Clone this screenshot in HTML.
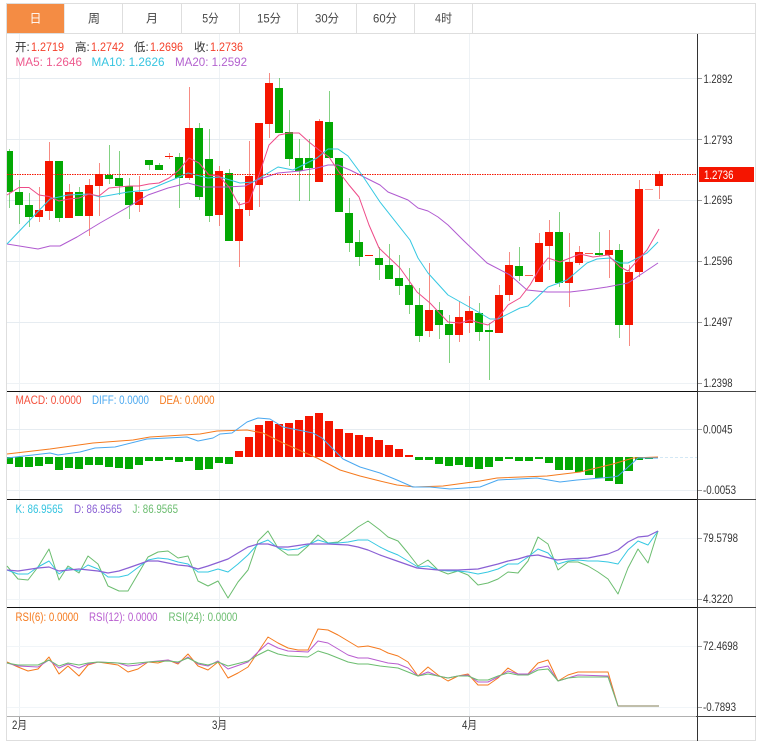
<!DOCTYPE html>
<html lang="zh">
<head>
<meta charset="utf-8">
<title>K线图</title>
<style>
html,body{margin:0;padding:0;background:#fff;width:762px;height:750px;overflow:hidden}
svg{display:block}
text{font-family:"Liberation Sans","Noto Sans CJK SC",sans-serif;font-size:11.5px}
</style>
</head>
<body>
<svg width="762" height="750" viewBox="0 0 762 750" xmlns="http://www.w3.org/2000/svg">
<rect width="762" height="750" fill="#fff"/>

<!-- vertical grid -->
<g fill="#eef2f5" shape-rendering="crispEdges">
<rect x="19" y="34" width="1" height="682"/>
<rect x="219" y="34" width="1" height="682"/>
<rect x="469" y="34" width="1" height="682"/>
</g>
<!-- horizontal grid -->
<g fill="#e6ecf1" shape-rendering="crispEdges">
<rect x="7" y="78" width="690" height="1"/>
<rect x="7" y="139" width="690" height="1"/>
<rect x="7" y="200" width="690" height="1"/>
<rect x="7" y="261" width="690" height="1"/>
<rect x="7" y="322" width="690" height="1"/>
<rect x="7" y="383" width="690" height="1" fill="#eef2f5"/>
<rect x="7" y="429" width="690" height="1"/>
<rect x="7" y="490" width="690" height="1" fill="#eaeff3"/>
<rect x="7" y="538" width="690" height="1" fill="#f1f5f8"/>
<rect x="7" y="599" width="690" height="1" fill="#f1f5f8"/>
<rect x="7" y="646" width="690" height="1" fill="#f1f5f8"/>
<rect x="7" y="707" width="690" height="1" fill="#f1f5f8"/>
</g>

<!-- tabs -->
<rect x="6.5" y="3.5" width="749" height="737" fill="none" stroke="#dedede"/>
<rect x="6" y="33" width="750" height="1" fill="#dedede"/>
<rect x="7" y="4" width="57" height="29" fill="#f48c44"/>
<g fill="#dedede" shape-rendering="crispEdges">
<rect x="64" y="4" width="1" height="29" fill="#e8e8e8"/>
<rect x="122" y="4" width="1" height="29"/>
<rect x="181" y="4" width="1" height="29"/>
<rect x="239" y="4" width="1" height="29"/>
<rect x="297" y="4" width="1" height="29"/>
<rect x="356" y="4" width="1" height="29"/>
<rect x="414" y="4" width="1" height="29"/>
<rect x="472" y="4" width="1" height="29"/>
</g>
<g fill="#444" text-anchor="middle" style="font-size:12px">
<text x="35.5" y="22.5" fill="#fff" style="font-size:12px">日</text>
<text x="94" y="22.5" style="font-size:12px">周</text>
<text x="152" y="22.5" style="font-size:12px">月</text>
<text x="210.5" y="22.5" style="font-size:12px" textLength="16.5" lengthAdjust="spacingAndGlyphs">5分</text>
<text x="269" y="22.5" style="font-size:12px" textLength="24" lengthAdjust="spacingAndGlyphs">15分</text>
<text x="327" y="22.5" style="font-size:12px" textLength="24" lengthAdjust="spacingAndGlyphs">30分</text>
<text x="385" y="22.5" style="font-size:12px" textLength="24" lengthAdjust="spacingAndGlyphs">60分</text>
<text x="443.5" y="22.5" style="font-size:12px" textLength="17" lengthAdjust="spacingAndGlyphs">4时</text>
</g>

<!-- legend -->
<g>
<text x="15" y="51" fill="#333">开:</text>
<text x="31" y="51" fill="#f4402a" textLength="33" lengthAdjust="spacingAndGlyphs">1.2719</text>
<text x="75" y="51" fill="#333">高:</text>
<text x="91" y="51" fill="#f4402a" textLength="33" lengthAdjust="spacingAndGlyphs">1.2742</text>
<text x="134" y="51" fill="#333">低:</text>
<text x="150" y="51" fill="#f4402a" textLength="33" lengthAdjust="spacingAndGlyphs">1.2696</text>
<text x="194" y="51" fill="#333">收:</text>
<text x="210" y="51" fill="#f4402a" textLength="33" lengthAdjust="spacingAndGlyphs">1.2736</text>
<text x="15.5" y="66" fill="#ee5a8e" textLength="66.5" lengthAdjust="spacingAndGlyphs">MA5:  1.2646</text>
<text x="91.5" y="66" fill="#35c4e0" textLength="73" lengthAdjust="spacingAndGlyphs">MA10:  1.2626</text>
<text x="175" y="66" fill="#b362cf" textLength="72" lengthAdjust="spacingAndGlyphs">MA20:  1.2592</text>
</g>

<!-- wicks -->
<g shape-rendering="crispEdges">
<g fill="#0aa60a" opacity=".5">
<rect x="9" y="149" width="1" height="59"/>
<rect x="19" y="180" width="1" height="44"/>
<rect x="29" y="193" width="1" height="34"/>
<rect x="59" y="161" width="1" height="61"/>
<rect x="79" y="187" width="1" height="29"/>
<rect x="109" y="145" width="1" height="39"/>
<rect x="119" y="151" width="1" height="44"/>
<rect x="129" y="178" width="1" height="41"/>
<rect x="149" y="160" width="1" height="10"/>
<rect x="159" y="163" width="1" height="7"/>
<rect x="179" y="153" width="1" height="55"/>
<rect x="199" y="123" width="1" height="77"/>
<rect x="209" y="129" width="1" height="93"/>
<rect x="229" y="169" width="1" height="72"/>
<rect x="279" y="78" width="1" height="55"/>
<rect x="289" y="110" width="1" height="56"/>
<rect x="299" y="139" width="1" height="62"/>
<rect x="309" y="139" width="1" height="62"/>
<rect x="329" y="91" width="1" height="67"/>
<rect x="349" y="198" width="1" height="54"/>
<rect x="359" y="230" width="1" height="36"/>
<rect x="379" y="247" width="1" height="33"/>
<rect x="389" y="244" width="1" height="35"/>
<rect x="399" y="255" width="1" height="40"/>
<rect x="409" y="268" width="1" height="46"/>
<rect x="419" y="288" width="1" height="54"/>
<rect x="439" y="302" width="1" height="37"/>
<rect x="449" y="315" width="1" height="48"/>
<rect x="479" y="303" width="1" height="38"/>
<rect x="489" y="323" width="1" height="57"/>
<rect x="519" y="247" width="1" height="34"/>
<rect x="559" y="212" width="1" height="75"/>
<rect x="599" y="232" width="1" height="24"/>
<rect x="619" y="244" width="1" height="94"/>
</g>
<g fill="#f01a0a" opacity=".5">
<rect x="39" y="187" width="1" height="35"/>
<rect x="49" y="142" width="1" height="78"/>
<rect x="69" y="184" width="1" height="34"/>
<rect x="89" y="179" width="1" height="57"/>
<rect x="99" y="163" width="1" height="53"/>
<rect x="139" y="176" width="1" height="36"/>
<rect x="169" y="153" width="1" height="6"/>
<rect x="189" y="87" width="1" height="93"/>
<rect x="219" y="166" width="1" height="60"/>
<rect x="239" y="202" width="1" height="65"/>
<rect x="249" y="141" width="1" height="75"/>
<rect x="259" y="123" width="1" height="84"/>
<rect x="269" y="73" width="1" height="65"/>
<rect x="319" y="119" width="1" height="63"/>
<rect x="429" y="263" width="1" height="74"/>
<rect x="459" y="301" width="1" height="41"/>
<rect x="469" y="296" width="1" height="37"/>
<rect x="499" y="285" width="1" height="48"/>
<rect x="509" y="252" width="1" height="49"/>
<rect x="539" y="233" width="1" height="49"/>
<rect x="549" y="220" width="1" height="50"/>
<rect x="569" y="233" width="1" height="74"/>
<rect x="579" y="246" width="1" height="19"/>
<rect x="609" y="230" width="1" height="48"/>
<rect x="629" y="265" width="1" height="81"/>
<rect x="639" y="180" width="1" height="97"/>
<rect x="659" y="171" width="1" height="28"/>
</g>
<!-- bodies -->
<g fill="#03a803">
<rect x="7" y="151" width="6" height="41"/>
<rect x="15" y="192" width="8" height="13"/>
<rect x="25" y="205" width="8" height="12"/>
<rect x="55" y="161" width="8" height="57"/>
<rect x="75" y="192" width="8" height="24"/>
<rect x="105" y="175" width="8" height="4"/>
<rect x="115" y="178" width="8" height="8"/>
<rect x="125" y="186" width="8" height="19"/>
<rect x="145" y="160" width="8" height="5"/>
<rect x="155" y="165" width="8" height="5"/>
<rect x="175" y="157" width="8" height="21"/>
<rect x="195" y="128" width="8" height="69"/>
<rect x="205" y="159" width="8" height="57"/>
<rect x="225" y="173" width="8" height="68"/>
<rect x="275" y="88" width="8" height="45"/>
<rect x="285" y="132" width="8" height="27"/>
<rect x="295" y="158" width="8" height="13"/>
<rect x="305" y="158" width="8" height="10"/>
<rect x="325" y="122" width="8" height="36"/>
<rect x="335" y="158" width="8" height="54"/>
<rect x="345" y="213" width="8" height="30"/>
<rect x="355" y="242" width="8" height="15"/>
<rect x="375" y="258" width="8" height="7"/>
<rect x="385" y="265" width="8" height="14"/>
<rect x="395" y="278" width="8" height="8"/>
<rect x="405" y="285" width="8" height="20"/>
<rect x="415" y="305" width="8" height="31"/>
<rect x="435" y="310" width="8" height="15"/>
<rect x="445" y="324" width="8" height="11"/>
<rect x="475" y="313" width="8" height="19"/>
<rect x="485" y="330" width="8" height="2"/>
<rect x="515" y="266" width="8" height="10"/>
<rect x="555" y="232" width="8" height="51"/>
<rect x="595" y="253" width="8" height="2"/>
<rect x="615" y="250" width="8" height="75"/>
</g>
<g fill="#f51500">
<rect x="35" y="210" width="8" height="7"/>
<rect x="45" y="161" width="8" height="50"/>
<rect x="65" y="192" width="8" height="26"/>
<rect x="85" y="185" width="8" height="31"/>
<rect x="95" y="174" width="8" height="12"/>
<rect x="135" y="192" width="8" height="13"/>
<rect x="165" y="156" width="8" height="1"/>
<rect x="185" y="128" width="8" height="50"/>
<rect x="215" y="171" width="8" height="44"/>
<rect x="235" y="209" width="8" height="32"/>
<rect x="245" y="176" width="8" height="34"/>
<rect x="255" y="123" width="8" height="62"/>
<rect x="265" y="83" width="8" height="41"/>
<rect x="315" y="121" width="8" height="61"/>
<rect x="365" y="255" width="8" height="1"/>
<rect x="425" y="310" width="8" height="21"/>
<rect x="455" y="317" width="8" height="18"/>
<rect x="465" y="311" width="8" height="12"/>
<rect x="495" y="295" width="8" height="38"/>
<rect x="505" y="265" width="8" height="30"/>
<rect x="525" y="275" width="8" height="1" opacity=".7"/>
<rect x="535" y="243" width="8" height="39"/>
<rect x="545" y="232" width="8" height="14"/>
<rect x="565" y="262" width="8" height="21"/>
<rect x="575" y="252" width="8" height="11"/>
<rect x="585" y="253" width="8" height="1" opacity=".7"/>
<rect x="605" y="250" width="8" height="5"/>
<rect x="625" y="272" width="8" height="53"/>
<rect x="635" y="189" width="8" height="83"/>
<rect x="645" y="189" width="8" height="1" opacity=".4"/>
<rect x="655" y="174" width="8" height="12"/>
</g>
</g>

<!-- MA lines -->
<g fill="none" stroke-width="1" stroke-linejoin="round">
<polyline stroke="#b05ad0" points="7,244 38,249 50,246 60,246 77,237 100,223 128,207 148,195 168,188 188,183 203,187 227,187 245,186 257,180 278,173 300,171 317,168 328,165 338,165 350,170 380,185 388,192 408,200 418,208 428,211 438,217 448,225 463,240 487,263 510,275 527,290 547,292 570,292 587,290 607,287 628,283 643,273 658,263"/>
<polyline stroke="#35c8e2" points="7,244 50,199 68,195 90,194 100,197 128,192 148,190 177,178 188,173 208,178 220,177 240,183 253,182 278,167 293,170 317,158 328,149 338,149 348,156 362,175 380,202 410,240 418,258 428,273 448,295 480,313 490,319 498,319 520,308 528,306 548,287 567,280 587,263 597,259 610,258 620,263 628,263 647,253 658,242"/>
<polyline stroke="#ee4a88" points="7,195 19,187.5 29,187.5 39,195 49,196.5 59,201 69,199 79,198 89,194 99,196 109,188 119,187 129,186 139,186 149,184 159,183 169,178 179,170 189,158 199,163 209,175 219,176 229,187 239,205 249,202 259,175 269,145 279,135 289,133 299,133 309,142 319,150 329,157 339,172 349,185 359,197 369,225 379,248 400,268 417,292 430,303 448,322 460,323 470,320 480,323 488,325 498,318 508,305 520,298 530,285 540,268 548,258 560,262 580,254 593,257 608,255 620,267 628,271 647,250 659,229"/>
</g>

<!-- last price -->
<line x1="7" y1="174.5" x2="697" y2="174.5" stroke="#f51500" stroke-width="1" stroke-dasharray="1.5 1"/>
<rect x="699" y="167" width="55" height="15" fill="#f51500"/>
<text x="704" y="179" fill="#fff" textLength="29.5" lengthAdjust="spacingAndGlyphs">1.2736</text>

<!-- MACD -->
<g shape-rendering="crispEdges">
<g fill="#03a803">
<rect x="7" y="457" width="6" height="7"/>
<rect x="15" y="457" width="8" height="10"/>
<rect x="25" y="457" width="8" height="10"/>
<rect x="35" y="457" width="8" height="9"/>
<rect x="45" y="457" width="8" height="7"/>
<rect x="55" y="457" width="8" height="13"/>
<rect x="65" y="457" width="8" height="11"/>
<rect x="75" y="457" width="8" height="12"/>
<rect x="85" y="457" width="8" height="8"/>
<rect x="95" y="457" width="8" height="8"/>
<rect x="105" y="457" width="8" height="10"/>
<rect x="115" y="457" width="8" height="11"/>
<rect x="125" y="457" width="8" height="12"/>
<rect x="135" y="457" width="8" height="8"/>
<rect x="145" y="457" width="8" height="4"/>
<rect x="155" y="457" width="8" height="4"/>
<rect x="165" y="457" width="8" height="3"/>
<rect x="175" y="457" width="8" height="5"/>
<rect x="185" y="457" width="8" height="4"/>
<rect x="195" y="457" width="8" height="13"/>
<rect x="205" y="457" width="8" height="12"/>
<rect x="215" y="457" width="8" height="6"/>
<rect x="225" y="457" width="8" height="7"/>
<rect x="415" y="457" width="8" height="3"/>
<rect x="425" y="457" width="8" height="3"/>
<rect x="435" y="457" width="8" height="7"/>
<rect x="445" y="457" width="8" height="9"/>
<rect x="455" y="457" width="8" height="8"/>
<rect x="465" y="457" width="8" height="10"/>
<rect x="475" y="457" width="8" height="12"/>
<rect x="485" y="457" width="8" height="10"/>
<rect x="495" y="457" width="8" height="4"/>
<rect x="505" y="457" width="8" height="2"/>
<rect x="515" y="457" width="8" height="4"/>
<rect x="525" y="457" width="8" height="4"/>
<rect x="535" y="457" width="8" height="2"/>
<rect x="545" y="457" width="8" height="6"/>
<rect x="555" y="457" width="8" height="13"/>
<rect x="565" y="457" width="8" height="13"/>
<rect x="575" y="457" width="8" height="15"/>
<rect x="585" y="457" width="8" height="18"/>
<rect x="595" y="457" width="8" height="21"/>
<rect x="605" y="457" width="8" height="24"/>
<rect x="615" y="457" width="8" height="27"/>
<rect x="625" y="457" width="8" height="14"/>
<rect x="635" y="457" width="8" height="3"/>
<rect x="645" y="457" width="8" height="2"/>
</g>
<g fill="#f51500">
<rect x="235" y="451" width="8" height="6"/>
<rect x="245" y="437" width="8" height="20"/>
<rect x="255" y="425" width="8" height="32"/>
<rect x="265" y="421" width="8" height="36"/>
<rect x="275" y="424" width="8" height="33"/>
<rect x="285" y="423" width="8" height="34"/>
<rect x="295" y="420" width="8" height="37"/>
<rect x="305" y="416" width="8" height="41"/>
<rect x="315" y="413" width="8" height="44"/>
<rect x="325" y="421" width="8" height="36"/>
<rect x="335" y="429" width="8" height="28"/>
<rect x="345" y="433" width="8" height="24"/>
<rect x="355" y="435" width="8" height="22"/>
<rect x="365" y="437" width="8" height="20"/>
<rect x="375" y="440" width="8" height="17"/>
<rect x="385" y="445" width="8" height="12"/>
<rect x="395" y="449" width="8" height="8"/>
<rect x="405" y="455" width="8" height="2"/>
</g>
</g>
<line x1="660" y1="457.5" x2="697" y2="457.5" stroke="#d3e8f5" stroke-dasharray="3 2"/>
<g fill="none" stroke-linejoin="round">
<polyline stroke="#f57a1e" points="7,454 50,449 93,443 133,440 150,437 200,434 217,431 247,430 263,433 283,443 317,458 340,470 360,476 380,481 397,485 415,487 443,486 480,481 497,478 547,476 580,472 613,464 633,458 658,457"/>
<polyline stroke="#4aa8f0" points="7,458 50,453 58,455 80,452 95,448 115,447 147,439 187,437 198,441 213,438 220,434 232,433 247,422 258,418 270,419 283,427 313,433 322,438 343,459 360,467 380,473 397,480 413,487 430,487 450,489 480,487 498,480 537,478 560,482 577,480 613,477 618,476 627,468 638,458 658,458"/>
</g>

<!-- KDJ -->
<g fill="none" stroke-linejoin="round">
<polyline stroke="#6bbd6f" points="7,566 18,579 28,580 38,567 49,549 59,580 68,566 79,573 88,556 98,564 108,586 119,591 128,591 148,557 158,552 168,551 178,558 188,556 198,581 208,586 218,581 228,598 238,582 248,570 258,541 268,531 278,548 288,555 298,555 308,546 318,535 328,543 338,542 348,535 358,527 368,521 380,530 388,537 398,541 408,553 418,566 428,560 438,570 448,574 458,571 468,575 478,585 488,583 498,579 508,572 518,573 528,561 538,537 548,544 558,570 568,562 578,562 588,566 598,572 608,579 618,594 628,568 638,549 648,563 658,531"/>
<polyline stroke="#35c8e2" points="7,570 18,574 28,574 38,567 49,561 59,574 68,568 79,571 88,565 98,569 108,577 119,577 128,575 148,560 158,558 168,559 178,562 188,564 198,572 208,572 218,569 228,572 238,564 248,555 258,544 268,540 278,548 288,550 298,549 308,545 318,540 328,543 338,543 348,542 358,540 368,540 380,547 388,551 398,555 408,561 418,567 428,566 438,570 448,571 458,571 468,572 478,574 488,572 498,569 508,564 518,564 528,557 538,549 548,553 558,564 568,561 578,560 588,561 598,561 608,562 618,564 628,550 638,541 648,545 658,531"/>
<polyline stroke="#8a60d4" stroke-width="1.2" points="7,570 18,571 38,568 49,567 59,571 79,569 98,571 108,573 119,571 128,568 148,561 158,561 178,565 188,566 198,569 208,566 228,559 238,553 248,547 258,544 268,544 278,547 288,547 308,544 328,544 348,545 358,547 368,550 380,555 397,561 417,568 438,570 458,570 478,569 498,564 508,561 518,559 528,556 538,555 557,560 568,559 588,558 598,556 608,554 618,550 628,542 638,537 648,536 658,531"/>
</g>

<!-- RSI -->
<g fill="none" stroke-linejoin="round">
<polyline stroke="#f57a1e" points="7,662 18,667 28,671 38,669 49,657 59,674 68,666 79,676 88,665 98,662 118,665 128,672 138,669 148,662 158,663 168,660 178,664 188,654 198,666 208,670 218,662 228,678 238,673 248,667 258,652 268,637 278,643 288,648 298,650 308,650 318,629 328,630 338,635 348,641 358,647 368,646 380,649 388,653 398,656 408,662 418,676 428,667 438,675 448,681 458,676 468,674 478,685 488,685 498,678 508,668 518,674 528,674 538,663 548,660 558,681 568,675 578,672 608,672 618,706 658,706"/>
<polyline stroke="#b85ccf" points="7,663 18,666 38,667 49,660 59,668 68,664 79,668 88,664 98,662 118,663 128,666 138,665 148,662 168,660 178,663 188,657 198,664 208,666 218,661 228,669 248,662 258,652 268,643 278,648 288,651 308,652 318,641 328,643 338,649 348,655 358,658 368,658 380,661 388,663 398,664 408,668 418,676 428,672 438,676 448,678 458,676 468,675 478,682 488,682 498,677 508,671 518,674 528,674 538,668 548,666 558,681 568,678 578,675 608,676 618,706 658,706"/>
<polyline stroke="#6bbd6f" points="7,663 18,665 38,665 49,660 59,666 68,663 79,665 88,663 98,662 118,663 128,664 148,662 168,661 178,662 188,658 198,663 208,665 218,662 228,666 248,661 258,655 268,650 278,654 288,656 308,657 318,651 328,654 338,658 348,662 358,664 368,664 380,666 398,668 408,672 418,676 428,674 438,676 448,678 458,676 468,676 478,680 488,680 498,676 508,673 518,675 528,675 538,670 548,669 558,681 568,678 578,677 608,677 618,706"/>
<line x1="618" y1="706" x2="659" y2="706" stroke="#aca88e" stroke-width="1.6"/>
</g>

<!-- axes and panel separators -->
<g shape-rendering="crispEdges">
<rect x="697" y="34" width="1" height="707" fill="#333"/>
<rect x="7" y="391" width="690" height="1" fill="#111"/>
<rect x="698" y="391" width="58" height="1" fill="#444"/>
<rect x="7" y="499" width="690" height="1" fill="#111"/>
<rect x="698" y="499" width="58" height="1" fill="#444"/>
<rect x="7" y="607" width="690" height="1" fill="#111"/>
<rect x="698" y="607" width="58" height="1" fill="#444"/>
<rect x="7" y="716" width="690" height="1" fill="#b0b0b0"/>
<rect x="696" y="716" width="60" height="1" fill="#444"/>
<g fill="#999">
<rect x="698" y="78" width="4" height="1"/>
<rect x="698" y="139" width="4" height="1"/>
<rect x="698" y="200" width="4" height="1"/>
<rect x="698" y="261" width="4" height="1"/>
<rect x="698" y="322" width="4" height="1"/>
<rect x="698" y="383" width="4" height="1"/>
<rect x="698" y="429" width="4" height="1"/>
<rect x="698" y="490" width="4" height="1"/>
<rect x="698" y="538" width="4" height="1"/>
<rect x="698" y="599" width="4" height="1"/>
<rect x="698" y="646" width="4" height="1"/>
<rect x="698" y="707" width="4" height="1"/>
<rect x="19" y="717" width="1" height="3"/>
<rect x="219" y="717" width="1" height="3"/>
<rect x="469" y="717" width="1" height="3"/>
</g>
</g>

<!-- indicator legends -->
<text x="15.5" y="404" fill="#f4503c" textLength="66" lengthAdjust="spacingAndGlyphs">MACD: 0.0000</text>
<text x="92" y="404" fill="#4aa8f0" textLength="57" lengthAdjust="spacingAndGlyphs">DIFF: 0.0000</text>
<text x="159.5" y="404" fill="#f57a1e" textLength="55" lengthAdjust="spacingAndGlyphs">DEA: 0.0000</text>
<text x="15.5" y="513" fill="#35c4e0" textLength="47.5" lengthAdjust="spacingAndGlyphs">K: 86.9565</text>
<text x="74" y="513" fill="#8a60d4" textLength="48" lengthAdjust="spacingAndGlyphs">D: 86.9565</text>
<text x="132.5" y="513" fill="#6bbd6f" textLength="45.5" lengthAdjust="spacingAndGlyphs">J: 86.9565</text>
<text x="15.5" y="621" fill="#f57a1e" textLength="63" lengthAdjust="spacingAndGlyphs">RSI(6): 0.0000</text>
<text x="89" y="621" fill="#b85ccf" textLength="68.5" lengthAdjust="spacingAndGlyphs">RSI(12): 0.0000</text>
<text x="168.5" y="621" fill="#6bbd6f" textLength="69" lengthAdjust="spacingAndGlyphs">RSI(24): 0.0000</text>

<!-- axis labels -->
<g fill="#333">
<text x="703.5" y="83" textLength="29" lengthAdjust="spacingAndGlyphs">1.2892</text>
<text x="703.5" y="144" textLength="29" lengthAdjust="spacingAndGlyphs">1.2793</text>
<text x="703.5" y="204" textLength="29" lengthAdjust="spacingAndGlyphs">1.2695</text>
<text x="703.5" y="265" textLength="29" lengthAdjust="spacingAndGlyphs">1.2596</text>
<text x="703.5" y="326" textLength="29" lengthAdjust="spacingAndGlyphs">1.2497</text>
<text x="703.5" y="387" textLength="29" lengthAdjust="spacingAndGlyphs">1.2398</text>
<text x="703" y="433.5" textLength="29.5" lengthAdjust="spacingAndGlyphs">0.0045</text>
<text x="703" y="494" textLength="33" lengthAdjust="spacingAndGlyphs">-0.0053</text>
<text x="703" y="542" textLength="35" lengthAdjust="spacingAndGlyphs">79.5798</text>
<text x="703" y="603" textLength="30" lengthAdjust="spacingAndGlyphs">4.3220</text>
<text x="703" y="650" textLength="35" lengthAdjust="spacingAndGlyphs">72.4698</text>
<text x="703" y="711" textLength="33" lengthAdjust="spacingAndGlyphs">-0.7893</text>
<text x="12" y="729" textLength="15" lengthAdjust="spacingAndGlyphs">2月</text>
<text x="212" y="729" textLength="15" lengthAdjust="spacingAndGlyphs">3月</text>
<text x="462" y="729" textLength="15" lengthAdjust="spacingAndGlyphs">4月</text>
</g>
</svg>
</body>
</html>
